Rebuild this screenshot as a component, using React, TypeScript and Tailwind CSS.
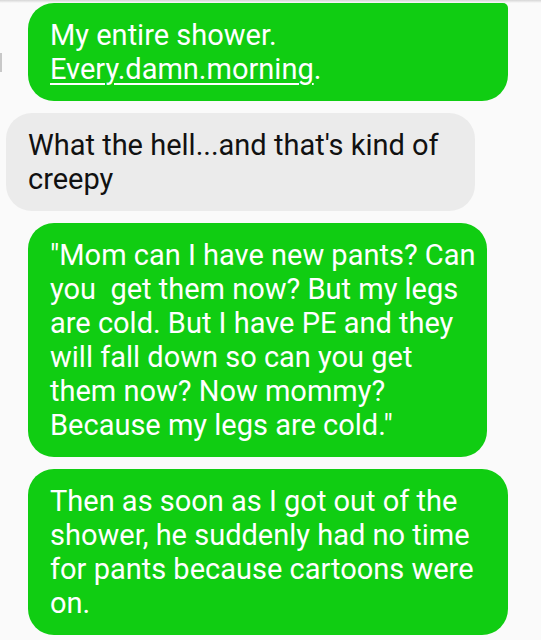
import React from 'react'

type Msg = {
  id: number
  sent: boolean
  width: string
  corners: string
  lines: React.ReactNode[]
}

const MESSAGES: Msg[] = [
  {
    id: 1,
    sent: true,
    width: 'w-[480px]',
    corners: 'rounded-[26px] rounded-tr-[5px]',
    lines: [
      'My entire shower.',
      <>
        <span className="underline decoration-[1.5px] underline-offset-[4px]">Every.damn.morning</span>.
      </>,
    ],
  },
  {
    id: 2,
    sent: false,
    width: 'w-[469px]',
    corners: 'rounded-[26px]',
    lines: ["What the hell...and that's kind of", 'creepy'],
  },
  {
    id: 3,
    sent: true,
    width: 'w-[459px]',
    corners: 'rounded-[26px]',
    lines: [
      '"Mom can I have new pants? Can',
      'you\u00a0 get them now? But my legs',
      'are cold. But I have PE and they',
      'will fall down so can you get',
      'them now? Now mommy?',
      'Because my legs are cold."',
    ],
  },
  {
    id: 4,
    sent: true,
    width: 'w-[480px]',
    corners: 'rounded-[26px]',
    lines: [
      'Then as soon as I got out of the',
      'shower, he suddenly had no time',
      'for pants because cartoons were',
      'on.',
    ],
  },
]

function Bubble({ msg }: { msg: Msg }) {
  return (
    <div
      className={`${msg.width} ${msg.corners} py-[15px] ${
        msg.sent ? 'ml-[28px] bg-[#10cd12] text-white pl-[22px]' : 'ml-[6px] bg-[#ebebeb] text-[#111111] pl-[22px]'
      }`}
    >
      {msg.lines.map((line, i) => (
        <p key={i} className="whitespace-nowrap text-[29px] leading-[34px]">
          {line}
        </p>
      ))}
    </div>
  )
}

export default function App() {
  return (
    <div className="relative h-[640px] w-[541px] overflow-hidden bg-[#fafafa] font-['Roboto',sans-serif]">
      {/* header shadow */}
      <div className="h-[3px] bg-gradient-to-b from-[#d6d6d6] to-[#fafafa]" />

      {/* scroll indicator */}
      <div className="absolute left-0 top-[53px] h-[19px] w-[2px] bg-[#c8c8c8]" />

      <div className="flex flex-col gap-[12px]">
        {MESSAGES.map((m) => (
          <Bubble key={m.id} msg={m} />
        ))}
      </div>
    </div>
  )
}
